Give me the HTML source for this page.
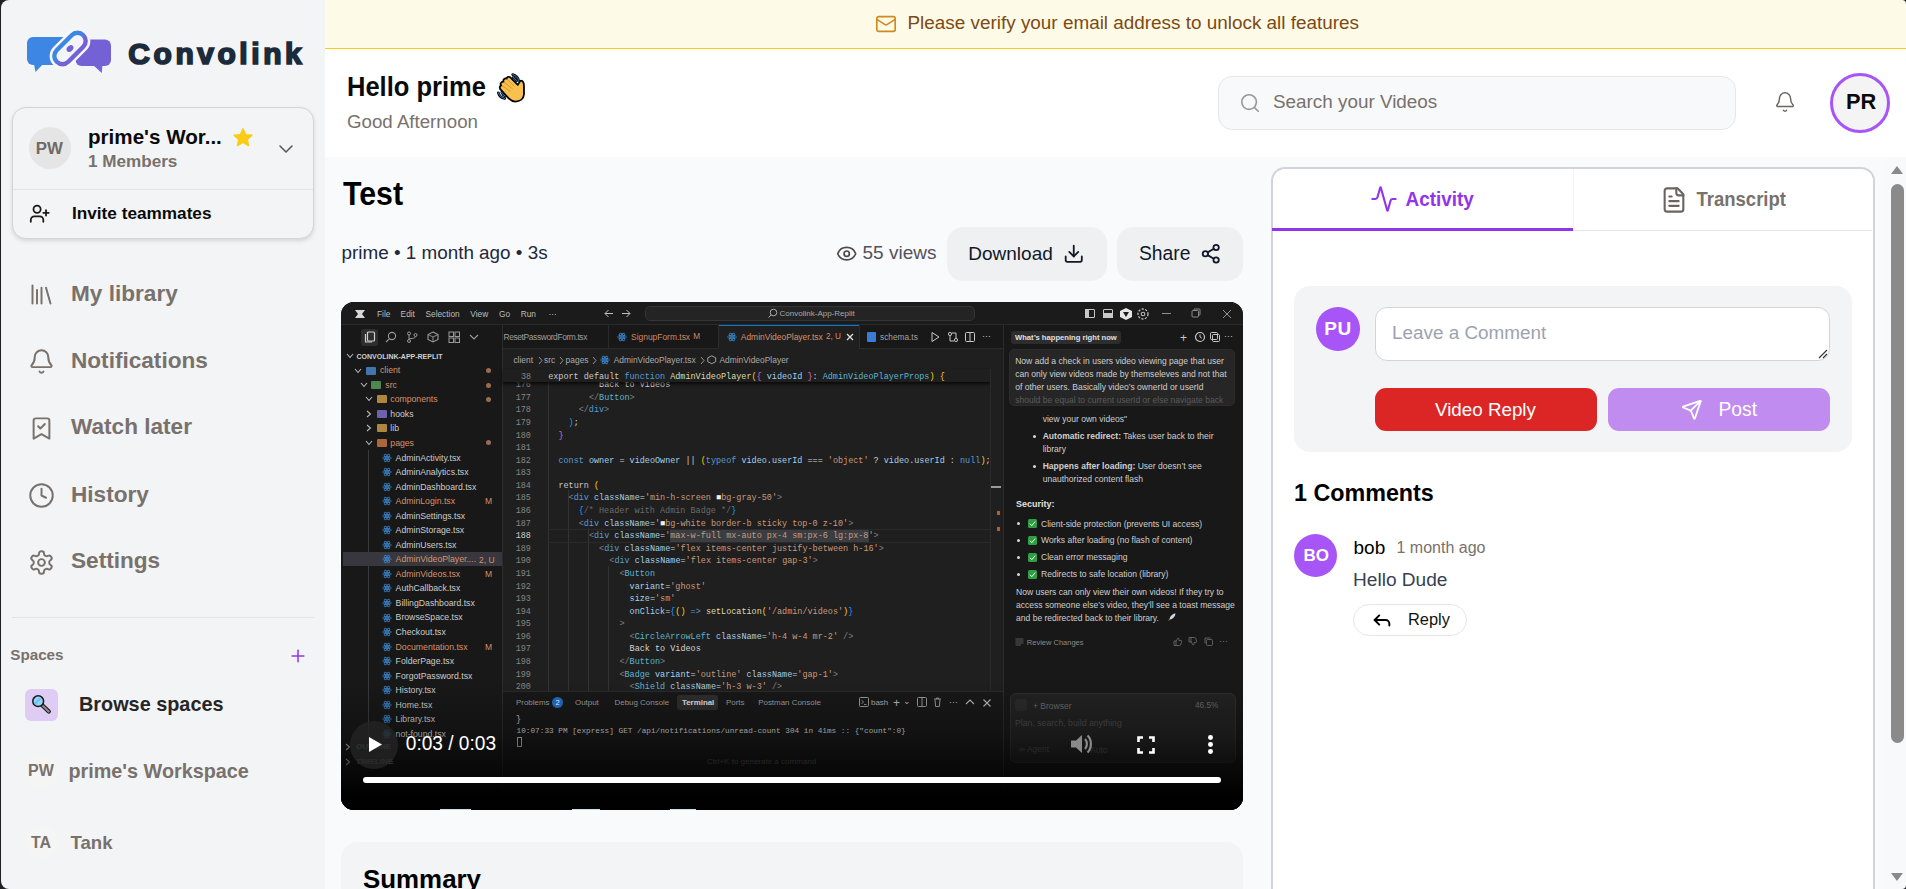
<!DOCTYPE html>
<html><head><meta charset="utf-8"><title>Convolink</title>
<style>
html,body{margin:0;padding:0;width:1906px;height:889px;overflow:hidden;background:#1f2023;}
#app{position:absolute;left:1px;top:0;width:1905px;height:889px;overflow:hidden;border-radius:8px 4px 4px 8px;}
.t{position:absolute;white-space:nowrap;line-height:1;font-family:"Liberation Sans",sans-serif;}
.r{position:absolute;}
</style></head><body><div id="app">
<div style="position:absolute;left:-1px;top:0;width:1906px;height:889px;">
<div class="r" style="left:0px;top:0px;width:325px;height:889px;background:#f3f4f6;"></div>
<svg class="r" style="left:0;top:0" width="120" height="80" viewBox="0 0 120 80">
<defs><linearGradient id="lg" x1="0" y1="-9" x2="0" y2="9" gradientUnits="userSpaceOnUse"><stop offset="0.35" stop-color="#3e86e4"/><stop offset="0.7" stop-color="#7561d6"/></linearGradient></defs>
<rect x="27" y="37" width="44" height="28" rx="6" fill="#3e86e4"/>
<path d="M33.8 63 L35.5 72 L44 63 Z" fill="#3e86e4"/>
<rect x="75.5" y="39.5" width="35.5" height="26.5" rx="6" fill="#7561d6"/>
<path d="M93 65 L101.7 73 L102.5 65 Z" fill="#7561d6"/>
<g transform="translate(70 48.5) rotate(-45)">
<rect x="-23.5" y="-12.8" width="47" height="25.6" rx="12.8" fill="#f6f7f9"/>
<rect x="-18.8" y="-8.2" width="37.6" height="16.4" rx="8.2" fill="#f3f4f6" stroke="url(#lg)" stroke-width="4.4"/>
<ellipse cx="0" cy="0" rx="3.8" ry="2.9" fill="#7561d6"/>
</g>
</svg>
<div class="t" style="left:128.30px;top:39.11px;font-size:30px;color:#1c2b3b;font-weight:700;letter-spacing:3.55px;-webkit-text-stroke:1.7px #1c2b3b;">Convolink</div>
<div class="r" style="left:12px;top:107px;width:302px;height:132px;box-sizing:border-box;border:1px solid #d4d4d8;border-radius:14px;background:#f3f4f6;box-shadow:0 2px 4px rgba(0,0,0,0.12);"></div>
<div class="r" style="left:29px;top:127px;width:42px;height:42px;border-radius:50%;background:#e5e5e5;"></div>
<div class="t" style="left:35.80px;top:140.78px;font-size:16.8px;color:#6f6a66;font-weight:700;">PW</div>
<div class="t" style="left:88.00px;top:127.06px;font-size:20.6px;color:#0a0a0a;font-weight:700;">prime's Wor...</div>
<svg class="r" style="left:232px;top:127px" width="22" height="22" viewBox="0 0 24 24"><path d="M12 2l2.9 6.26 6.86.72-5.13 4.6 1.45 6.75L12 16.9l-6.08 3.43 1.45-6.75-5.13-4.6 6.86-.72z" fill="#facc15" stroke="#facc15" stroke-width="1.5" stroke-linejoin="round"/></svg>
<div class="t" style="left:88.00px;top:152.72px;font-size:17.1px;color:#78716c;font-weight:700;">1 Members</div>
<svg class="r" style="left:274px;top:136.6px;" width="24" height="24" viewBox="0 0 24 24" fill="none" stroke="#5f5955" stroke-width="1.6" stroke-linecap="round" stroke-linejoin="round"><path d="m6 9 6 6 6-6"/></svg>
<div class="r" style="left:13px;top:189px;width:300px;height:1px;background:#e2e3e6;"></div>
<svg class="r" style="left:29.2px;top:203px;" width="21.5" height="21.5" viewBox="0 0 24 24" fill="none" stroke="#1c1917" stroke-width="2" stroke-linecap="round" stroke-linejoin="round"><path d="M16 21v-2a4 4 0 0 0-4-4H6a4 4 0 0 0-4 4v2"/><circle cx="9" cy="7" r="4"/><line x1="19" x2="19" y1="8" y2="14"/><line x1="22" x2="16" y1="11" y2="11"/></svg>
<div class="t" style="left:72.00px;top:205.44px;font-size:17.2px;color:#0a0a0a;font-weight:700;">Invite teammates</div>
<svg class="r" style="left:27.8px;top:281.2px;" width="27" height="27" viewBox="0 0 24 24" fill="none" stroke="#78716c" stroke-width="1.75" stroke-linecap="round" stroke-linejoin="round"><path d="m16 6 4 14"/><path d="M12 6v14"/><path d="M8 8v12"/><path d="M4 4v16"/></svg>
<div class="t" style="left:71.00px;top:282.67px;font-size:22.6px;color:#78716c;font-weight:700;">My library</div>
<svg class="r" style="left:27.8px;top:348.2px;" width="27" height="27" viewBox="0 0 24 24" fill="none" stroke="#78716c" stroke-width="1.75" stroke-linecap="round" stroke-linejoin="round"><path d="M10.268 21a2 2 0 0 0 3.464 0"/><path d="M3.262 15.326A1 1 0 0 0 4 17h16a1 1 0 0 0 .74-1.673C19.41 13.956 18 12.499 18 8A6 6 0 0 0 6 8c0 4.499-1.411 5.956-2.738 7.326"/></svg>
<div class="t" style="left:71.00px;top:349.67px;font-size:22.6px;color:#78716c;font-weight:700;">Notifications</div>
<svg class="r" style="left:27.8px;top:414.8px;" width="27" height="27" viewBox="0 0 24 24" fill="none" stroke="#78716c" stroke-width="1.75" stroke-linecap="round" stroke-linejoin="round"><path d="m19 21-7-4-7 4V5a2 2 0 0 1 2-2h10a2 2 0 0 1 2 2Z"/><path d="m9 10 2 2 4-4"/></svg>
<div class="t" style="left:71.00px;top:416.27px;font-size:22.6px;color:#78716c;font-weight:700;">Watch later</div>
<svg class="r" style="left:27.8px;top:482.2px;" width="27" height="27" viewBox="0 0 24 24" fill="none" stroke="#78716c" stroke-width="1.75" stroke-linecap="round" stroke-linejoin="round"><circle cx="12" cy="12" r="10"/><polyline points="12 6 12 12 16 14"/></svg>
<div class="t" style="left:71.00px;top:483.67px;font-size:22.6px;color:#78716c;font-weight:700;">History</div>
<svg class="r" style="left:27.8px;top:549.0px;" width="27" height="27" viewBox="0 0 24 24" fill="none" stroke="#78716c" stroke-width="1.75" stroke-linecap="round" stroke-linejoin="round"><path d="M12.22 2h-.44a2 2 0 0 0-2 2v.18a2 2 0 0 1-1 1.73l-.43.25a2 2 0 0 1-2 0l-.15-.08a2 2 0 0 0-2.73.73l-.22.38a2 2 0 0 0 .73 2.73l.15.1a2 2 0 0 1 1 1.72v.51a2 2 0 0 1-1 1.74l-.15.09a2 2 0 0 0-.73 2.73l.22.38a2 2 0 0 0 2.73.73l.15-.08a2 2 0 0 1 2 0l.43.25a2 2 0 0 1 1 1.73V20a2 2 0 0 0 2 2h.44a2 2 0 0 0 2-2v-.18a2 2 0 0 1 1-1.73l.43-.25a2 2 0 0 1 2 0l.15.08a2 2 0 0 0 2.73-.73l.22-.39a2 2 0 0 0-.73-2.73l-.15-.08a2 2 0 0 1-1-1.74v-.5a2 2 0 0 1 1-1.74l.15-.09a2 2 0 0 0 .73-2.73l-.22-.38a2 2 0 0 0-2.73-.73l-.15.08a2 2 0 0 1-2 0l-.43-.25a2 2 0 0 1-1-1.73V4a2 2 0 0 0-2-2z"/><circle cx="12" cy="12" r="3"/></svg>
<div class="t" style="left:71.00px;top:550.47px;font-size:22.6px;color:#78716c;font-weight:700;">Settings</div>
<div class="r" style="left:12px;top:617px;width:302px;height:1px;background:#e2e3e6;"></div>
<div class="t" style="left:10.30px;top:646.63px;font-size:15.2px;color:#78716c;font-weight:700;">Spaces</div>
<svg class="r" style="left:288px;top:646px;" width="20" height="20" viewBox="0 0 24 24" fill="none" stroke="#9333ea" stroke-width="1.8" stroke-linecap="round" stroke-linejoin="round"><path d="M5 12h14"/><path d="M12 5v14"/></svg>
<div class="r" style="left:25px;top:689px;width:33px;height:32px;border-radius:6px;background:#dfccf5;"></div>
<svg class="r" style="left:30px;top:694px" width="24" height="24" viewBox="0 0 24 24">
<path d="M12.2 11.2 L18.8 17.6" stroke="#111" stroke-width="4.2" stroke-linecap="round"/>
<path d="M12.2 11.2 L18.8 17.6" stroke="#8a8a8a" stroke-width="2.2" stroke-linecap="round"/>
<circle cx="8.2" cy="7.2" r="5.4" fill="#8fd3f7" stroke="#1a1a1a" stroke-width="1.5"/>
<path d="M5 9.5 L10.5 4.5" stroke="#6ab6ef" stroke-width="1.6"/>
</svg>
<div class="t" style="left:79.00px;top:694.50px;font-size:19.85px;color:#262626;font-weight:700;">Browse spaces</div>
<div class="r" style="left:26px;top:756px;width:32px;height:32px;border-radius:50%;background:#f5f5f4;"></div>
<div class="t" style="left:28.00px;top:763.46px;font-size:16px;color:#78716c;font-weight:700;">PW</div>
<div class="t" style="left:68.50px;top:762.44px;font-size:19.8px;color:#78716c;font-weight:700;">prime's Workspace</div>
<div class="r" style="left:26px;top:826px;width:32px;height:32px;border-radius:50%;background:#f5f5f4;"></div>
<div class="t" style="left:31.00px;top:835.46px;font-size:16px;color:#78716c;font-weight:700;">TA</div>
<div class="t" style="left:70.50px;top:833.76px;font-size:18.6px;color:#78716c;font-weight:700;">Tank</div>
<div class="r" style="left:325px;top:0px;width:1581px;height:48px;background:#fefae8;"></div>
<div class="r" style="left:325px;top:48px;width:1581px;height:1px;background:#facc15;"></div>
<svg class="r" style="left:875px;top:13px;" width="22" height="22" viewBox="0 0 24 24" fill="none" stroke="#d08a1e" stroke-width="1.8" stroke-linecap="round" stroke-linejoin="round"><rect width="20" height="16" x="2" y="4" rx="2"/><path d="m22 7-8.97 5.7a1.94 1.94 0 0 1-2.06 0L2 7"/></svg>
<div class="t" style="left:907.50px;top:14.20px;font-size:18.9px;color:#7c4a12;font-weight:400;">Please verify your email address to unlock all features</div>
<div class="r" style="left:325px;top:49px;width:1581px;height:108px;background:#ffffff;"></div>
<div class="t" style="left:347.00px;top:75.41px;font-size:25.5px;color:#0a0a0a;font-weight:700;transform:scaleY(1.06);transform-origin:0 21.59px;">Hello prime</div>
<svg class="r" style="left:490px;top:68px" width="40" height="38" viewBox="0 0 936 889">
<g stroke-linecap="round" fill="none">
<path d="M530 155 C600 175 650 220 670 290" stroke="#000" stroke-width="62"/><path d="M540 225 C580 240 610 265 620 300" stroke="#000" stroke-width="62"/>
<path d="M195 580 C215 650 270 700 345 712" stroke="#000" stroke-width="62"/><path d="M275 570 C290 610 315 640 350 650" stroke="#000" stroke-width="62"/>
</g>
<path d="M745 300 C790 320 795 380 795 430 L795 620 C785 720 705 785 590 785 C520 785 470 745 420 695 L250 505 C215 465 225 420 262 405 C230 370 260 315 315 318 C300 270 340 235 392 248 C392 205 445 195 475 218 L650 395 L690 330 C705 300 722 290 745 300 Z" fill="#f8c04f" stroke="#000" stroke-width="42" stroke-linejoin="round"/>
<g stroke="#d08a20" stroke-width="18" stroke-linecap="round" fill="none">
<path d="M290 420 L470 540"/><path d="M330 335 L520 480"/><path d="M400 265 L560 420"/>
</g>
<g stroke-linecap="round" fill="none" stroke="#3a8be0" stroke-width="22">
<path d="M530 155 C600 175 650 220 670 290"/><path d="M540 225 C580 240 610 265 620 300"/>
<path d="M195 580 C215 650 270 700 345 712"/><path d="M275 570 C290 610 315 640 350 650"/>
</g>
</svg>
<div class="t" style="left:347.00px;top:112.87px;font-size:18.7px;color:#78716c;font-weight:400;">Good Afternoon</div>
<div class="r" style="left:1218px;top:76px;width:518px;height:54px;box-sizing:border-box;border:1px solid #e5e7eb;border-radius:14px;background:#f8f9fa;"></div>
<svg class="r" style="left:1239px;top:92px;" width="22" height="22" viewBox="0 0 24 24" fill="none" stroke="#999999" stroke-width="1.8" stroke-linecap="round" stroke-linejoin="round"><circle cx="11" cy="11" r="8"/><path d="m21 21-4.3-4.3"/></svg>
<div class="t" style="left:1273.00px;top:93.34px;font-size:18.86px;color:#78716c;font-weight:400;">Search your Videos</div>
<svg class="r" style="left:1774px;top:91px;" width="22" height="22" viewBox="0 0 24 24" fill="none" stroke="#6b6461" stroke-width="1.6" stroke-linecap="round" stroke-linejoin="round"><path d="M10.268 21a2 2 0 0 0 3.464 0"/><path d="M3.262 15.326A1 1 0 0 0 4 17h16a1 1 0 0 0 .74-1.673C19.41 13.956 18 12.499 18 8A6 6 0 0 0 6 8c0 4.499-1.411 5.956-2.738 7.326"/></svg>
<div class="r" style="left:1830px;top:73px;width:60px;height:60px;box-sizing:border-box;border:3px solid #a855f7;border-radius:50%;background:#f4f4f4;"></div>
<div class="t" style="left:1846.00px;top:90.55px;font-size:21.8px;color:#0a0a0a;font-weight:700;">PR</div>
<div class="r" style="left:325px;top:157px;width:1561px;height:732px;background:#f9fafb;"></div>
<div class="t" style="left:343.00px;top:180.15px;font-size:30.3px;color:#000;font-weight:700;transform:scaleY(1.09);transform-origin:0 25.65px;">Test</div>
<div class="t" style="left:341.50px;top:243.73px;font-size:18.87px;color:#1e293b;font-weight:400;">prime &bull; 1 month ago &bull; 3s</div>
<svg class="r" style="left:836.1px;top:242.8px;" width="21.4" height="21.4" viewBox="0 0 24 24" fill="none" stroke="#4f4a47" stroke-width="1.9" stroke-linecap="round" stroke-linejoin="round"><path d="M2.062 12.348a1 1 0 0 1 0-.696 10.75 10.75 0 0 1 19.876 0 1 1 0 0 1 0 .696 10.75 10.75 0 0 1-19.876 0"/><circle cx="12" cy="12" r="3"/></svg>
<div class="t" style="left:862.50px;top:242.82px;font-size:19px;color:#52525b;font-weight:400;">55 views</div>
<div class="r" style="left:947px;top:227px;width:160px;height:54px;border-radius:16px;background:#eff0f2;"></div>
<div class="t" style="left:968.30px;top:243.92px;font-size:19.0px;color:#111827;font-weight:400;">Download</div>
<svg class="r" style="left:1063.3px;top:242.8px;" width="21.5" height="21.5" viewBox="0 0 24 24" fill="none" stroke="#111827" stroke-width="2" stroke-linecap="round" stroke-linejoin="round"><path d="M21 15v4a2 2 0 0 1-2 2H5a2 2 0 0 1-2-2v-4"/><polyline points="7 10 12 15 17 10"/><line x1="12" x2="12" y1="15" y2="3"/></svg>
<div class="r" style="left:1117px;top:227px;width:126px;height:54px;border-radius:16px;background:#eff0f2;"></div>
<div class="t" style="left:1139.00px;top:243.66px;font-size:19.3px;color:#111827;font-weight:400;">Share</div>
<svg class="r" style="left:1200px;top:242.8px;" width="21.5" height="21.5" viewBox="0 0 24 24" fill="none" stroke="#111827" stroke-width="2" stroke-linecap="round" stroke-linejoin="round"><circle cx="18" cy="5" r="3"/><circle cx="6" cy="12" r="3"/><circle cx="18" cy="19" r="3"/><line x1="8.59" x2="15.42" y1="13.51" y2="17.49"/><line x1="15.41" x2="8.59" y1="6.51" y2="10.49"/></svg>
<div class="r" style="left:341px;top:302px;width:902px;height:508px;border-radius:13px;overflow:hidden;background:#000;">
<div class="r" style="left:0;top:0;width:902px;height:508px;">
<div class="r" style="left:0.0px;top:0.0px;width:902px;height:23px;background:#1b1b1b;"></div>
<div class="r" style="left:0.0px;top:22.0px;width:902px;height:1px;background:#2b2b2b;"></div>
<svg class="r" style="left:11px;top:4px;" width="16" height="16" viewBox="0 0 16 16" preserveAspectRatio="none"><path d="M3 4 L13 4 L10 8 L13 12 L3 12 L6 8 Z" fill="#d8d8d8"/></svg>
<div class="t" style="left:36.0px;top:7.67px;font-size:8.3px;color:#bdbdbd;font-weight:400;">File</div>
<div class="t" style="left:59.6px;top:7.67px;font-size:8.3px;color:#bdbdbd;font-weight:400;">Edit</div>
<div class="t" style="left:84.5px;top:7.67px;font-size:8.3px;color:#bdbdbd;font-weight:400;">Selection</div>
<div class="t" style="left:129.3px;top:7.67px;font-size:8.3px;color:#bdbdbd;font-weight:400;">View</div>
<div class="t" style="left:158.0px;top:7.67px;font-size:8.3px;color:#bdbdbd;font-weight:400;">Go</div>
<div class="t" style="left:179.7px;top:7.67px;font-size:8.3px;color:#bdbdbd;font-weight:400;">Run</div>
<div class="t" style="left:207.6px;top:7.67px;font-size:8.3px;color:#bdbdbd;font-weight:400;">···</div>
<svg class="r" style="left:263px;top:7px;" width="10" height="9" viewBox="0 0 10 9" preserveAspectRatio="none"><path d="M9 4.5 H1.2 M4.5 1 L1 4.5 L4.5 8" fill="none" stroke="#c0c0c0" stroke-width="1"/></svg>
<svg class="r" style="left:280px;top:7px;" width="10" height="9" viewBox="0 0 10 9" preserveAspectRatio="none"><path d="M1 4.5 H8.8 M5.5 1 L9 4.5 L5.5 8" fill="none" stroke="#c0c0c0" stroke-width="1"/></svg>
<div class="r" style="left:303.5px;top:4.0px;width:330px;height:15px;box-sizing:border-box;border:1px solid #353535;border-radius:5px;background:#242424;"></div>
<svg class="r" style="left:426px;top:6px;" width="11" height="11" viewBox="0 0 11 11" preserveAspectRatio="none"><circle cx="6.5" cy="4.5" r="3.3" fill="none" stroke="#aaa" stroke-width="1"/><path d="M4 7 L1.5 9.5" stroke="#aaa" stroke-width="1"/></svg>
<div class="t" style="left:438.6px;top:7.85px;font-size:8.0px;color:#a8a8a8;font-weight:400;">Convolink-App-Replit</div>
<div class="r" style="left:744.0px;top:7.0px;width:10px;height:9px;box-sizing:border-box;border:1.3px solid #c8c8c8;border-radius:1px;"></div>
<div class="r" style="left:762.0px;top:7.0px;width:10px;height:9px;box-sizing:border-box;border:1.3px solid #c8c8c8;border-radius:1px;"></div>
<div class="r" style="left:744.0px;top:7.0px;width:4px;height:9px;background:#c8c8c8;"></div>
<div class="r" style="left:762.0px;top:11.0px;width:10px;height:5px;background:#c8c8c8;"></div>
<svg class="r" style="left:778px;top:5px;" width="14" height="14" viewBox="0 0 14 14" preserveAspectRatio="none"><path d="M7 1 L13 4 L13 10 L7 13 L1 10 L1 4 Z" fill="#e6e6e6"/><path d="M4 5 L10 5 L7 10 Z" fill="#1b1b1b"/></svg>
<svg class="r" style="left:795px;top:5px;" width="14" height="14" viewBox="0 0 14 14" preserveAspectRatio="none"><circle cx="7" cy="7" r="5" fill="none" stroke="#bdbdbd" stroke-width="1.3" stroke-dasharray="2.2 1.4"/><circle cx="7" cy="7" r="1.8" fill="none" stroke="#bdbdbd" stroke-width="1.1"/></svg>
<div class="r" style="left:820.5px;top:11.0px;width:9px;height:1px;background:#8f8f8f;"></div>
<svg class="r" style="left:850px;top:6px;" width="10" height="10" viewBox="0 0 10 10" preserveAspectRatio="none"><rect x="1" y="2.5" width="6.5" height="6.5" rx="1" fill="none" stroke="#9a9a9a" stroke-width="0.9"/><path d="M3 2.5 V1.5 Q3 1 3.5 1 H8.5 Q9 1 9 1.5 V6.5 Q9 7 8.5 7 H7.5" fill="none" stroke="#9a9a9a" stroke-width="0.9"/></svg>
<svg class="r" style="left:881px;top:6.5px;" width="10" height="10" viewBox="0 0 10 10" preserveAspectRatio="none"><path d="M1 1 L9 9 M9 1 L1 9" stroke="#a0a0a0" stroke-width="0.9"/></svg>
<div class="r" style="left:0.0px;top:23.0px;width:161px;height:485px;background:#181818;"></div>
<div class="r" style="left:161.0px;top:23.0px;width:1px;height:485px;background:#2b2b2b;"></div>
<div class="r" style="left:20.0px;top:27.0px;width:17px;height:17px;border-radius:3px;background:#2e2e2e;"></div>
<svg class="r" style="left:23px;top:29px;" width="12" height="12" viewBox="0 0 12 12" preserveAspectRatio="none"><rect x="3.5" y="1" width="7" height="9" rx="1" fill="none" stroke="#d0d0d0" stroke-width="1.2"/><path d="M1.5 3 V11 H8" fill="none" stroke="#d0d0d0" stroke-width="1.2"/></svg>
<svg class="r" style="left:44px;top:29px;" width="12" height="12" viewBox="0 0 12 12" preserveAspectRatio="none"><circle cx="7" cy="5" r="3.6" fill="none" stroke="#9a9a9a" stroke-width="1.1"/><path d="M4.3 7.8 L1 11" stroke="#9a9a9a" stroke-width="1.1"/></svg>
<svg class="r" style="left:65px;top:29px;" width="12" height="12" viewBox="0 0 12 12" preserveAspectRatio="none"><circle cx="3" cy="2.5" r="1.5" fill="none" stroke="#9a9a9a"/><circle cx="3" cy="10" r="1.5" fill="none" stroke="#9a9a9a"/><circle cx="9.5" cy="4" r="1.5" fill="none" stroke="#9a9a9a"/><path d="M3 4 V8.5 M9.5 5.5 C9.5 8 3 7 3 8.5" fill="none" stroke="#9a9a9a"/></svg>
<svg class="r" style="left:86px;top:29px;" width="12" height="12" viewBox="0 0 12 12" preserveAspectRatio="none"><path d="M6 1 L11 3.5 L11 8.5 L6 11 L1 8.5 L1 3.5 Z" fill="none" stroke="#9a9a9a" stroke-width="1.1"/><path d="M1 3.5 L6 6 L11 3.5 M6 6 V11" fill="none" stroke="#9a9a9a" stroke-width="0.9"/></svg>
<svg class="r" style="left:107px;top:29px;" width="12" height="12" viewBox="0 0 12 12" preserveAspectRatio="none"><rect x="1" y="1" width="4.5" height="4.5" fill="none" stroke="#9a9a9a"/><rect x="7" y="1" width="4.5" height="4.5" fill="none" stroke="#9a9a9a"/><rect x="1" y="7" width="4.5" height="4.5" fill="none" stroke="#9a9a9a"/><rect x="7" y="7" width="4.5" height="4.5" fill="none" stroke="#9a9a9a"/></svg>
<svg class="r" style="left:128px;top:31px;" width="10" height="8" viewBox="0 0 10 8" preserveAspectRatio="none"><path d="M1 2 L5 6 L9 2" fill="none" stroke="#9a9a9a" stroke-width="1.1"/></svg>
<svg class="r" style="left:5px;top:50.5px;" width="8" height="6" viewBox="0 0 8 6" preserveAspectRatio="none"><path d="M1 1 L4 4.5 L7 1" fill="none" stroke="#b8b8b8" stroke-width="1.1"/></svg>
<div class="t" style="left:15.5px;top:50.83px;font-size:7.0px;color:#d0d0d0;font-weight:700;">CONVOLINK-APP-REPLIT</div>
<svg class="r" style="left:13px;top:65.5px;" width="8" height="6" viewBox="0 0 8 6" preserveAspectRatio="none"><path d="M1 1 L4 4.5 L7 1" fill="none" stroke="#b8b8b8" stroke-width="1.1"/></svg>
<div class="r" style="left:24.5px;top:64.5px;width:10.5px;height:8px;border-radius:1px;background:#4a86c8;opacity:0.85;"></div>
<div class="t" style="left:39.0px;top:64.44px;font-size:8.7px;color:#d7916a;font-weight:400;">client</div>
<div class="r" style="left:145.0px;top:66.0px;width:5px;height:5px;border-radius:50%;background:#9a6b55;"></div>
<svg class="r" style="left:19px;top:80px;" width="8" height="6" viewBox="0 0 8 6" preserveAspectRatio="none"><path d="M1 1 L4 4.5 L7 1" fill="none" stroke="#b8b8b8" stroke-width="1.1"/></svg>
<div class="r" style="left:29.7px;top:79.0px;width:10.5px;height:8px;border-radius:1px;background:#5b9a5b;opacity:0.85;"></div>
<div class="t" style="left:44.3px;top:78.94px;font-size:8.7px;color:#d7916a;font-weight:400;">src</div>
<div class="r" style="left:145.0px;top:80.5px;width:5px;height:5px;border-radius:50%;background:#9a6b55;"></div>
<svg class="r" style="left:24px;top:94.30000000000001px;" width="8" height="6" viewBox="0 0 8 6" preserveAspectRatio="none"><path d="M1 1 L4 4.5 L7 1" fill="none" stroke="#b8b8b8" stroke-width="1.1"/></svg>
<div class="r" style="left:35.5px;top:93.3px;width:10.5px;height:8px;border-radius:1px;background:#c89a48;opacity:0.85;"></div>
<div class="t" style="left:49.3px;top:93.24px;font-size:8.7px;color:#d7916a;font-weight:400;">components</div>
<div class="r" style="left:145.0px;top:94.8px;width:5px;height:5px;border-radius:50%;background:#9a6b55;"></div>
<svg class="r" style="left:25px;top:107.89999999999998px;" width="6" height="8" viewBox="0 0 6 8" preserveAspectRatio="none"><path d="M1 1 L4.5 4 L1 7" fill="none" stroke="#b8b8b8" stroke-width="1.1"/></svg>
<div class="r" style="left:35.5px;top:107.9px;width:10.5px;height:8px;border-radius:1px;background:#7f70c8;opacity:0.85;"></div>
<div class="t" style="left:49.3px;top:107.84px;font-size:8.7px;color:#cccccc;font-weight:400;">hooks</div>
<svg class="r" style="left:25px;top:122.30000000000001px;" width="6" height="8" viewBox="0 0 6 8" preserveAspectRatio="none"><path d="M1 1 L4.5 4 L1 7" fill="none" stroke="#b8b8b8" stroke-width="1.1"/></svg>
<div class="r" style="left:35.5px;top:122.3px;width:10.5px;height:8px;border-radius:1px;background:#c89a48;opacity:0.85;"></div>
<div class="t" style="left:49.3px;top:122.24px;font-size:8.7px;color:#cccccc;font-weight:400;">lib</div>
<svg class="r" style="left:24px;top:137.7px;" width="8" height="6" viewBox="0 0 8 6" preserveAspectRatio="none"><path d="M1 1 L4 4.5 L7 1" fill="none" stroke="#b8b8b8" stroke-width="1.1"/></svg>
<div class="r" style="left:35.5px;top:136.7px;width:10.5px;height:8px;border-radius:1px;background:#c8743e;opacity:0.85;"></div>
<div class="t" style="left:49.3px;top:136.64px;font-size:8.7px;color:#d7916a;font-weight:400;">pages</div>
<div class="r" style="left:145.0px;top:138.2px;width:5px;height:5px;border-radius:50%;background:#9a6b55;"></div>
<div class="r" style="left:27.0px;top:148.0px;width:1px;height:300px;background:#3a3a3a;"></div>
<svg class="r" style="left:40.5px;top:150.8px;" width="10" height="10" viewBox="0 0 10 10" preserveAspectRatio="none"><circle cx="5" cy="5" r="0.9" fill="#3b8ed8"/><ellipse cx="5" cy="5" rx="4.4" ry="1.6" fill="none" stroke="#3b8ed8" stroke-width="0.7"/><ellipse cx="5" cy="5" rx="4.4" ry="1.6" fill="none" stroke="#3b8ed8" stroke-width="0.7" transform="rotate(60 5 5)"/><ellipse cx="5" cy="5" rx="4.4" ry="1.6" fill="none" stroke="#3b8ed8" stroke-width="0.7" transform="rotate(120 5 5)"/></svg>
<div class="t" style="left:54.6px;top:151.74px;font-size:8.7px;color:#cccccc;font-weight:400;">AdminActivity.tsx</div>
<svg class="r" style="left:40.5px;top:165.32px;" width="10" height="10" viewBox="0 0 10 10" preserveAspectRatio="none"><circle cx="5" cy="5" r="0.9" fill="#3b8ed8"/><ellipse cx="5" cy="5" rx="4.4" ry="1.6" fill="none" stroke="#3b8ed8" stroke-width="0.7"/><ellipse cx="5" cy="5" rx="4.4" ry="1.6" fill="none" stroke="#3b8ed8" stroke-width="0.7" transform="rotate(60 5 5)"/><ellipse cx="5" cy="5" rx="4.4" ry="1.6" fill="none" stroke="#3b8ed8" stroke-width="0.7" transform="rotate(120 5 5)"/></svg>
<div class="t" style="left:54.6px;top:166.26px;font-size:8.7px;color:#cccccc;font-weight:400;">AdminAnalytics.tsx</div>
<svg class="r" style="left:40.5px;top:179.84000000000003px;" width="10" height="10" viewBox="0 0 10 10" preserveAspectRatio="none"><circle cx="5" cy="5" r="0.9" fill="#3b8ed8"/><ellipse cx="5" cy="5" rx="4.4" ry="1.6" fill="none" stroke="#3b8ed8" stroke-width="0.7"/><ellipse cx="5" cy="5" rx="4.4" ry="1.6" fill="none" stroke="#3b8ed8" stroke-width="0.7" transform="rotate(60 5 5)"/><ellipse cx="5" cy="5" rx="4.4" ry="1.6" fill="none" stroke="#3b8ed8" stroke-width="0.7" transform="rotate(120 5 5)"/></svg>
<div class="t" style="left:54.6px;top:180.78px;font-size:8.7px;color:#cccccc;font-weight:400;">AdminDashboard.tsx</div>
<svg class="r" style="left:40.5px;top:194.36px;" width="10" height="10" viewBox="0 0 10 10" preserveAspectRatio="none"><circle cx="5" cy="5" r="0.9" fill="#3b8ed8"/><ellipse cx="5" cy="5" rx="4.4" ry="1.6" fill="none" stroke="#3b8ed8" stroke-width="0.7"/><ellipse cx="5" cy="5" rx="4.4" ry="1.6" fill="none" stroke="#3b8ed8" stroke-width="0.7" transform="rotate(60 5 5)"/><ellipse cx="5" cy="5" rx="4.4" ry="1.6" fill="none" stroke="#3b8ed8" stroke-width="0.7" transform="rotate(120 5 5)"/></svg>
<div class="t" style="left:54.6px;top:195.30px;font-size:8.7px;color:#d7916a;font-weight:400;">AdminLogin.tsx</div>
<div class="t" style="left:144.0px;top:195.42px;font-size:8.5px;color:#d7916a;font-weight:400;">M</div>
<svg class="r" style="left:40.5px;top:208.88px;" width="10" height="10" viewBox="0 0 10 10" preserveAspectRatio="none"><circle cx="5" cy="5" r="0.9" fill="#3b8ed8"/><ellipse cx="5" cy="5" rx="4.4" ry="1.6" fill="none" stroke="#3b8ed8" stroke-width="0.7"/><ellipse cx="5" cy="5" rx="4.4" ry="1.6" fill="none" stroke="#3b8ed8" stroke-width="0.7" transform="rotate(60 5 5)"/><ellipse cx="5" cy="5" rx="4.4" ry="1.6" fill="none" stroke="#3b8ed8" stroke-width="0.7" transform="rotate(120 5 5)"/></svg>
<div class="t" style="left:54.6px;top:209.82px;font-size:8.7px;color:#cccccc;font-weight:400;">AdminSettings.tsx</div>
<svg class="r" style="left:40.5px;top:223.39999999999998px;" width="10" height="10" viewBox="0 0 10 10" preserveAspectRatio="none"><circle cx="5" cy="5" r="0.9" fill="#3b8ed8"/><ellipse cx="5" cy="5" rx="4.4" ry="1.6" fill="none" stroke="#3b8ed8" stroke-width="0.7"/><ellipse cx="5" cy="5" rx="4.4" ry="1.6" fill="none" stroke="#3b8ed8" stroke-width="0.7" transform="rotate(60 5 5)"/><ellipse cx="5" cy="5" rx="4.4" ry="1.6" fill="none" stroke="#3b8ed8" stroke-width="0.7" transform="rotate(120 5 5)"/></svg>
<div class="t" style="left:54.6px;top:224.34px;font-size:8.7px;color:#cccccc;font-weight:400;">AdminStorage.tsx</div>
<svg class="r" style="left:40.5px;top:237.92000000000007px;" width="10" height="10" viewBox="0 0 10 10" preserveAspectRatio="none"><circle cx="5" cy="5" r="0.9" fill="#3b8ed8"/><ellipse cx="5" cy="5" rx="4.4" ry="1.6" fill="none" stroke="#3b8ed8" stroke-width="0.7"/><ellipse cx="5" cy="5" rx="4.4" ry="1.6" fill="none" stroke="#3b8ed8" stroke-width="0.7" transform="rotate(60 5 5)"/><ellipse cx="5" cy="5" rx="4.4" ry="1.6" fill="none" stroke="#3b8ed8" stroke-width="0.7" transform="rotate(120 5 5)"/></svg>
<div class="t" style="left:54.6px;top:238.86px;font-size:8.7px;color:#cccccc;font-weight:400;">AdminUsers.tsx</div>
<div class="r" style="left:2.0px;top:250.4px;width:159px;height:14px;background:#37373d;"></div>
<svg class="r" style="left:40.5px;top:252.44000000000005px;" width="10" height="10" viewBox="0 0 10 10" preserveAspectRatio="none"><circle cx="5" cy="5" r="0.9" fill="#3b8ed8"/><ellipse cx="5" cy="5" rx="4.4" ry="1.6" fill="none" stroke="#3b8ed8" stroke-width="0.7"/><ellipse cx="5" cy="5" rx="4.4" ry="1.6" fill="none" stroke="#3b8ed8" stroke-width="0.7" transform="rotate(60 5 5)"/><ellipse cx="5" cy="5" rx="4.4" ry="1.6" fill="none" stroke="#3b8ed8" stroke-width="0.7" transform="rotate(120 5 5)"/></svg>
<div class="t" style="left:54.6px;top:253.38px;font-size:8.7px;color:#d7916a;font-weight:400;">AdminVideoPlayer....</div>
<div class="t" style="left:138.0px;top:253.50px;font-size:8.5px;color:#d7916a;font-weight:400;">2, U</div>
<svg class="r" style="left:40.5px;top:266.96000000000004px;" width="10" height="10" viewBox="0 0 10 10" preserveAspectRatio="none"><circle cx="5" cy="5" r="0.9" fill="#3b8ed8"/><ellipse cx="5" cy="5" rx="4.4" ry="1.6" fill="none" stroke="#3b8ed8" stroke-width="0.7"/><ellipse cx="5" cy="5" rx="4.4" ry="1.6" fill="none" stroke="#3b8ed8" stroke-width="0.7" transform="rotate(60 5 5)"/><ellipse cx="5" cy="5" rx="4.4" ry="1.6" fill="none" stroke="#3b8ed8" stroke-width="0.7" transform="rotate(120 5 5)"/></svg>
<div class="t" style="left:54.6px;top:267.90px;font-size:8.7px;color:#d7916a;font-weight:400;">AdminVideos.tsx</div>
<div class="t" style="left:144.0px;top:268.02px;font-size:8.5px;color:#d7916a;font-weight:400;">M</div>
<svg class="r" style="left:40.5px;top:281.48px;" width="10" height="10" viewBox="0 0 10 10" preserveAspectRatio="none"><circle cx="5" cy="5" r="0.9" fill="#3b8ed8"/><ellipse cx="5" cy="5" rx="4.4" ry="1.6" fill="none" stroke="#3b8ed8" stroke-width="0.7"/><ellipse cx="5" cy="5" rx="4.4" ry="1.6" fill="none" stroke="#3b8ed8" stroke-width="0.7" transform="rotate(60 5 5)"/><ellipse cx="5" cy="5" rx="4.4" ry="1.6" fill="none" stroke="#3b8ed8" stroke-width="0.7" transform="rotate(120 5 5)"/></svg>
<div class="t" style="left:54.6px;top:282.42px;font-size:8.7px;color:#cccccc;font-weight:400;">AuthCallback.tsx</div>
<svg class="r" style="left:40.5px;top:296.0px;" width="10" height="10" viewBox="0 0 10 10" preserveAspectRatio="none"><circle cx="5" cy="5" r="0.9" fill="#3b8ed8"/><ellipse cx="5" cy="5" rx="4.4" ry="1.6" fill="none" stroke="#3b8ed8" stroke-width="0.7"/><ellipse cx="5" cy="5" rx="4.4" ry="1.6" fill="none" stroke="#3b8ed8" stroke-width="0.7" transform="rotate(60 5 5)"/><ellipse cx="5" cy="5" rx="4.4" ry="1.6" fill="none" stroke="#3b8ed8" stroke-width="0.7" transform="rotate(120 5 5)"/></svg>
<div class="t" style="left:54.6px;top:296.94px;font-size:8.7px;color:#cccccc;font-weight:400;">BillingDashboard.tsx</div>
<svg class="r" style="left:40.5px;top:310.52px;" width="10" height="10" viewBox="0 0 10 10" preserveAspectRatio="none"><circle cx="5" cy="5" r="0.9" fill="#3b8ed8"/><ellipse cx="5" cy="5" rx="4.4" ry="1.6" fill="none" stroke="#3b8ed8" stroke-width="0.7"/><ellipse cx="5" cy="5" rx="4.4" ry="1.6" fill="none" stroke="#3b8ed8" stroke-width="0.7" transform="rotate(60 5 5)"/><ellipse cx="5" cy="5" rx="4.4" ry="1.6" fill="none" stroke="#3b8ed8" stroke-width="0.7" transform="rotate(120 5 5)"/></svg>
<div class="t" style="left:54.6px;top:311.46px;font-size:8.7px;color:#cccccc;font-weight:400;">BrowseSpace.tsx</div>
<svg class="r" style="left:40.5px;top:325.03999999999996px;" width="10" height="10" viewBox="0 0 10 10" preserveAspectRatio="none"><circle cx="5" cy="5" r="0.9" fill="#3b8ed8"/><ellipse cx="5" cy="5" rx="4.4" ry="1.6" fill="none" stroke="#3b8ed8" stroke-width="0.7"/><ellipse cx="5" cy="5" rx="4.4" ry="1.6" fill="none" stroke="#3b8ed8" stroke-width="0.7" transform="rotate(60 5 5)"/><ellipse cx="5" cy="5" rx="4.4" ry="1.6" fill="none" stroke="#3b8ed8" stroke-width="0.7" transform="rotate(120 5 5)"/></svg>
<div class="t" style="left:54.6px;top:325.98px;font-size:8.7px;color:#cccccc;font-weight:400;">Checkout.tsx</div>
<svg class="r" style="left:40.5px;top:339.55999999999995px;" width="10" height="10" viewBox="0 0 10 10" preserveAspectRatio="none"><circle cx="5" cy="5" r="0.9" fill="#3b8ed8"/><ellipse cx="5" cy="5" rx="4.4" ry="1.6" fill="none" stroke="#3b8ed8" stroke-width="0.7"/><ellipse cx="5" cy="5" rx="4.4" ry="1.6" fill="none" stroke="#3b8ed8" stroke-width="0.7" transform="rotate(60 5 5)"/><ellipse cx="5" cy="5" rx="4.4" ry="1.6" fill="none" stroke="#3b8ed8" stroke-width="0.7" transform="rotate(120 5 5)"/></svg>
<div class="t" style="left:54.6px;top:340.50px;font-size:8.7px;color:#d7916a;font-weight:400;">Documentation.tsx</div>
<div class="t" style="left:144.0px;top:340.62px;font-size:8.5px;color:#d7916a;font-weight:400;">M</div>
<svg class="r" style="left:40.5px;top:354.08000000000004px;" width="10" height="10" viewBox="0 0 10 10" preserveAspectRatio="none"><circle cx="5" cy="5" r="0.9" fill="#3b8ed8"/><ellipse cx="5" cy="5" rx="4.4" ry="1.6" fill="none" stroke="#3b8ed8" stroke-width="0.7"/><ellipse cx="5" cy="5" rx="4.4" ry="1.6" fill="none" stroke="#3b8ed8" stroke-width="0.7" transform="rotate(60 5 5)"/><ellipse cx="5" cy="5" rx="4.4" ry="1.6" fill="none" stroke="#3b8ed8" stroke-width="0.7" transform="rotate(120 5 5)"/></svg>
<div class="t" style="left:54.6px;top:355.02px;font-size:8.7px;color:#cccccc;font-weight:400;">FolderPage.tsx</div>
<svg class="r" style="left:40.5px;top:368.6px;" width="10" height="10" viewBox="0 0 10 10" preserveAspectRatio="none"><circle cx="5" cy="5" r="0.9" fill="#3b8ed8"/><ellipse cx="5" cy="5" rx="4.4" ry="1.6" fill="none" stroke="#3b8ed8" stroke-width="0.7"/><ellipse cx="5" cy="5" rx="4.4" ry="1.6" fill="none" stroke="#3b8ed8" stroke-width="0.7" transform="rotate(60 5 5)"/><ellipse cx="5" cy="5" rx="4.4" ry="1.6" fill="none" stroke="#3b8ed8" stroke-width="0.7" transform="rotate(120 5 5)"/></svg>
<div class="t" style="left:54.6px;top:369.54px;font-size:8.7px;color:#cccccc;font-weight:400;">ForgotPassword.tsx</div>
<svg class="r" style="left:40.5px;top:383.12px;" width="10" height="10" viewBox="0 0 10 10" preserveAspectRatio="none"><circle cx="5" cy="5" r="0.9" fill="#3b8ed8"/><ellipse cx="5" cy="5" rx="4.4" ry="1.6" fill="none" stroke="#3b8ed8" stroke-width="0.7"/><ellipse cx="5" cy="5" rx="4.4" ry="1.6" fill="none" stroke="#3b8ed8" stroke-width="0.7" transform="rotate(60 5 5)"/><ellipse cx="5" cy="5" rx="4.4" ry="1.6" fill="none" stroke="#3b8ed8" stroke-width="0.7" transform="rotate(120 5 5)"/></svg>
<div class="t" style="left:54.6px;top:384.06px;font-size:8.7px;color:#cccccc;font-weight:400;">History.tsx</div>
<svg class="r" style="left:40.5px;top:397.64px;" width="10" height="10" viewBox="0 0 10 10" preserveAspectRatio="none"><circle cx="5" cy="5" r="0.9" fill="#3b8ed8"/><ellipse cx="5" cy="5" rx="4.4" ry="1.6" fill="none" stroke="#3b8ed8" stroke-width="0.7"/><ellipse cx="5" cy="5" rx="4.4" ry="1.6" fill="none" stroke="#3b8ed8" stroke-width="0.7" transform="rotate(60 5 5)"/><ellipse cx="5" cy="5" rx="4.4" ry="1.6" fill="none" stroke="#3b8ed8" stroke-width="0.7" transform="rotate(120 5 5)"/></svg>
<div class="t" style="left:54.6px;top:398.58px;font-size:8.7px;color:#cccccc;font-weight:400;">Home.tsx</div>
<svg class="r" style="left:40.5px;top:412.1600000000001px;" width="10" height="10" viewBox="0 0 10 10" preserveAspectRatio="none"><circle cx="5" cy="5" r="0.9" fill="#3b8ed8"/><ellipse cx="5" cy="5" rx="4.4" ry="1.6" fill="none" stroke="#3b8ed8" stroke-width="0.7"/><ellipse cx="5" cy="5" rx="4.4" ry="1.6" fill="none" stroke="#3b8ed8" stroke-width="0.7" transform="rotate(60 5 5)"/><ellipse cx="5" cy="5" rx="4.4" ry="1.6" fill="none" stroke="#3b8ed8" stroke-width="0.7" transform="rotate(120 5 5)"/></svg>
<div class="t" style="left:54.6px;top:413.10px;font-size:8.7px;color:#cccccc;font-weight:400;">Library.tsx</div>
<svg class="r" style="left:40.5px;top:426.68000000000006px;" width="10" height="10" viewBox="0 0 10 10" preserveAspectRatio="none"><circle cx="5" cy="5" r="0.9" fill="#3b8ed8"/><ellipse cx="5" cy="5" rx="4.4" ry="1.6" fill="none" stroke="#3b8ed8" stroke-width="0.7"/><ellipse cx="5" cy="5" rx="4.4" ry="1.6" fill="none" stroke="#3b8ed8" stroke-width="0.7" transform="rotate(60 5 5)"/><ellipse cx="5" cy="5" rx="4.4" ry="1.6" fill="none" stroke="#3b8ed8" stroke-width="0.7" transform="rotate(120 5 5)"/></svg>
<div class="t" style="left:54.6px;top:427.62px;font-size:8.7px;color:#cccccc;font-weight:400;">not-found.tsx</div>
<div class="t" style="left:15.0px;top:441.35px;font-size:8px;color:#8a8a8a;font-weight:700;">OUTLINE</div>
<svg class="r" style="left:4px;top:441px;" width="6" height="8" viewBox="0 0 6 8" preserveAspectRatio="none"><path d="M1 1 L4.5 4 L1 7" fill="none" stroke="#b8b8b8" stroke-width="1.1"/></svg>
<div class="t" style="left:15.0px;top:456.35px;font-size:8px;color:#8a8a8a;font-weight:700;">TIMELINE</div>
<svg class="r" style="left:4px;top:456px;" width="6" height="8" viewBox="0 0 6 8" preserveAspectRatio="none"><path d="M1 1 L4.5 4 L1 7" fill="none" stroke="#b8b8b8" stroke-width="1.1"/></svg>
<div class="r" style="left:162.0px;top:23.0px;width:500px;height:366px;background:#1f1f1f;"></div>
<div class="r" style="left:162.0px;top:23.0px;width:500px;height:24px;background:#181818;"></div>
<div class="r" style="left:162.0px;top:46.0px;width:500px;height:1px;background:#2b2b2b;"></div>
<div class="t" style="left:162.5px;top:31.09px;font-size:8.45px;color:#9d9d9d;font-weight:400;letter-spacing:-0.4px;">ResetPasswordForm.tsx</div>
<div class="r" style="left:267.0px;top:23.0px;width:1px;height:24px;background:#2b2b2b;"></div>
<svg class="r" style="left:276px;top:30.0px;" width="10" height="10" viewBox="0 0 10 10" preserveAspectRatio="none"><circle cx="5" cy="5" r="0.9" fill="#3b8ed8"/><ellipse cx="5" cy="5" rx="4.4" ry="1.8" fill="none" stroke="#3b8ed8" stroke-width="0.75"/><ellipse cx="5" cy="5" rx="4.4" ry="1.8" fill="none" stroke="#3b8ed8" stroke-width="0.75" transform="rotate(60 5 5)"/><ellipse cx="5" cy="5" rx="4.4" ry="1.8" fill="none" stroke="#3b8ed8" stroke-width="0.75" transform="rotate(120 5 5)"/></svg>
<div class="t" style="left:290.0px;top:31.09px;font-size:8.45px;color:#c88a6a;font-weight:400;">SignupForm.tsx</div>
<div class="t" style="left:352.2px;top:31.23px;font-size:8.2px;color:#c88a6a;font-weight:400;">M</div>
<div class="r" style="left:377.0px;top:23.0px;width:1px;height:24px;background:#2b2b2b;"></div>
<div class="r" style="left:378.0px;top:23.0px;width:140px;height:24px;background:#1f1f1f;"></div>
<div class="r" style="left:378.0px;top:23.0px;width:140px;height:1px;background:#0078d4;"></div>
<svg class="r" style="left:386px;top:30.0px;" width="10" height="10" viewBox="0 0 10 10" preserveAspectRatio="none"><circle cx="5" cy="5" r="0.9" fill="#3b8ed8"/><ellipse cx="5" cy="5" rx="4.4" ry="1.8" fill="none" stroke="#3b8ed8" stroke-width="0.75"/><ellipse cx="5" cy="5" rx="4.4" ry="1.8" fill="none" stroke="#3b8ed8" stroke-width="0.75" transform="rotate(60 5 5)"/><ellipse cx="5" cy="5" rx="4.4" ry="1.8" fill="none" stroke="#3b8ed8" stroke-width="0.75" transform="rotate(120 5 5)"/></svg>
<div class="t" style="left:399.8px;top:31.09px;font-size:8.45px;color:#d7916a;font-weight:400;">AdminVideoPlayer.tsx</div>
<div class="t" style="left:485.0px;top:31.23px;font-size:8.2px;color:#d7916a;font-weight:400;">2, U</div>
<svg class="r" style="left:504px;top:30px;" width="10" height="10" viewBox="0 0 10 10" preserveAspectRatio="none"><path d="M2 2 L8 8 M8 2 L2 8" stroke="#e0e0e0" stroke-width="1.3"/></svg>
<div class="r" style="left:518.0px;top:23.0px;width:1px;height:24px;background:#2b2b2b;"></div>
<div class="r" style="left:526.0px;top:30.0px;width:9px;height:10px;border-radius:1px;background:#3a7bd5;"></div>
<div class="t" style="left:539.0px;top:31.17px;font-size:8.3px;color:#a0a0a0;font-weight:400;">schema.ts</div>
<svg class="r" style="left:589px;top:29px;" width="10" height="12" viewBox="0 0 10 12" preserveAspectRatio="none"><path d="M2 1.5 L9 6 L2 10.5 Z" fill="none" stroke="#c8c8c8" stroke-width="1"/></svg>
<svg class="r" style="left:606px;top:29px;" width="12" height="12" viewBox="0 0 12 12" preserveAspectRatio="none"><circle cx="3" cy="3" r="1.6" fill="none" stroke="#c8c8c8"/><circle cx="9" cy="9" r="1.6" fill="none" stroke="#c8c8c8"/><path d="M3 4.6 V10 H7 M9 7.4 V2 H5" fill="none" stroke="#c8c8c8"/></svg>
<svg class="r" style="left:623px;top:29px;" width="12" height="12" viewBox="0 0 12 12" preserveAspectRatio="none"><rect x="1.5" y="1.5" width="9" height="9" rx="1" fill="none" stroke="#c8c8c8"/><path d="M6 1.5 V10.5" stroke="#c8c8c8"/></svg>
<div class="t" style="left:641.0px;top:29.77px;font-size:9px;color:#c8c8c8;font-weight:400;">···</div>
<div class="t" style="left:172.4px;top:53.59px;font-size:8.45px;color:#a9a9a9;font-weight:400;">client</div>
<div class="t" style="left:203.0px;top:53.59px;font-size:8.45px;color:#a9a9a9;font-weight:400;">src</div>
<div class="t" style="left:224.6px;top:53.59px;font-size:8.45px;color:#a9a9a9;font-weight:400;">pages</div>
<svg class="r" style="left:196.5px;top:53.5px;" width="5" height="9" viewBox="0 0 5 9" preserveAspectRatio="none"><path d="M1 1 L4 4.5 L1 8" fill="none" stroke="#a0a0a0" stroke-width="0.9"/></svg>
<svg class="r" style="left:218.39999999999998px;top:53.5px;" width="5" height="9" viewBox="0 0 5 9" preserveAspectRatio="none"><path d="M1 1 L4 4.5 L1 8" fill="none" stroke="#a0a0a0" stroke-width="0.9"/></svg>
<svg class="r" style="left:251.29999999999995px;top:53.5px;" width="5" height="9" viewBox="0 0 5 9" preserveAspectRatio="none"><path d="M1 1 L4 4.5 L1 8" fill="none" stroke="#a0a0a0" stroke-width="0.9"/></svg>
<svg class="r" style="left:359px;top:53.5px;" width="5" height="9" viewBox="0 0 5 9" preserveAspectRatio="none"><path d="M1 1 L4 4.5 L1 8" fill="none" stroke="#a0a0a0" stroke-width="0.9"/></svg>
<svg class="r" style="left:258.5px;top:52.5px;" width="10" height="10" viewBox="0 0 10 10" preserveAspectRatio="none"><circle cx="5" cy="5" r="0.9" fill="#3b8ed8"/><ellipse cx="5" cy="5" rx="4.4" ry="1.8" fill="none" stroke="#3b8ed8" stroke-width="0.75"/><ellipse cx="5" cy="5" rx="4.4" ry="1.8" fill="none" stroke="#3b8ed8" stroke-width="0.75" transform="rotate(60 5 5)"/><ellipse cx="5" cy="5" rx="4.4" ry="1.8" fill="none" stroke="#3b8ed8" stroke-width="0.75" transform="rotate(120 5 5)"/></svg>
<div class="t" style="left:272.7px;top:53.59px;font-size:8.45px;color:#a9a9a9;font-weight:400;">AdminVideoPlayer.tsx</div>
<svg class="r" style="left:366px;top:53px;" width="9.5" height="9.5" viewBox="0 0 9.5 9.5" preserveAspectRatio="none"><path d="M4.75 0.8 L8.7 2.8 L8.7 6.7 L4.75 8.7 L0.8 6.7 L0.8 2.8 Z" fill="none" stroke="#b0b0b0" stroke-width="0.9"/></svg>
<div class="t" style="left:378.4px;top:53.59px;font-size:8.45px;color:#a9a9a9;font-weight:400;">AdminVideoPlayer</div>
<div class="r" style="left:207.2px;top:80.0px;width:1px;height:309px;background:#333333;"></div>
<div class="r" style="left:227.3px;top:188.0px;width:1px;height:201px;background:#333333;"></div>
<div class="r" style="left:247.3px;top:226.0px;width:1px;height:163px;background:#333333;"></div>
<div class="r" style="left:267.4px;top:264.0px;width:1px;height:125px;background:#333333;"></div>
<div class="t" style="left:174.7px;top:79.27px;font-size:8.48px;font-family:'Liberation Mono',monospace;"><span style="color:#858585">176</span></div>
<div class="t" style="left:258.1px;top:79.27px;font-size:8.48px;font-family:'Liberation Mono',monospace;"><span style="color:#d4d4d4">Back to Videos</span></div>
<div class="t" style="left:174.7px;top:91.85px;font-size:8.48px;font-family:'Liberation Mono',monospace;"><span style="color:#858585">177</span></div>
<div class="t" style="left:247.9px;top:91.85px;font-size:8.48px;font-family:'Liberation Mono',monospace;"><span style="color:#808080">&lt;/</span><span style="color:#5cb6cf">Button</span><span style="color:#808080">&gt;</span></div>
<div class="t" style="left:174.7px;top:104.43px;font-size:8.48px;font-family:'Liberation Mono',monospace;"><span style="color:#858585">178</span></div>
<div class="t" style="left:237.7px;top:104.43px;font-size:8.48px;font-family:'Liberation Mono',monospace;"><span style="color:#808080">&lt;/</span><span style="color:#569cd6">div</span><span style="color:#808080">&gt;</span></div>
<div class="t" style="left:174.7px;top:117.01px;font-size:8.48px;font-family:'Liberation Mono',monospace;"><span style="color:#858585">179</span></div>
<div class="t" style="left:227.6px;top:117.01px;font-size:8.48px;font-family:'Liberation Mono',monospace;"><span style="color:#179fff">)</span><span style="color:#d4d4d4">;</span></div>
<div class="t" style="left:174.7px;top:129.59px;font-size:8.48px;font-family:'Liberation Mono',monospace;"><span style="color:#858585">180</span></div>
<div class="t" style="left:217.4px;top:129.59px;font-size:8.48px;font-family:'Liberation Mono',monospace;"><span style="color:#da70d6">}</span></div>
<div class="t" style="left:174.7px;top:142.17px;font-size:8.48px;font-family:'Liberation Mono',monospace;"><span style="color:#858585">181</span></div>
<div class="t" style="left:207.2px;top:142.17px;font-size:8.48px;font-family:'Liberation Mono',monospace;"></div>
<div class="t" style="left:174.7px;top:154.75px;font-size:8.48px;font-family:'Liberation Mono',monospace;"><span style="color:#858585">182</span></div>
<div class="t" style="left:217.4px;top:154.75px;font-size:8.48px;font-family:'Liberation Mono',monospace;"><span style="color:#569cd6">const </span><span style="color:#a4d0ea">owner</span><span style="color:#d4d4d4"> = </span><span style="color:#a4d0ea">videoOwner</span><span style="color:#d4d4d4"> || </span><span style="color:#ffd700">(</span><span style="color:#569cd6">typeof </span><span style="color:#a4d0ea">video</span><span style="color:#d4d4d4">.</span><span style="color:#a4d0ea">userId</span><span style="color:#d4d4d4"> === </span><span style="color:#c99a7c">'object'</span><span style="color:#d4d4d4"> ? </span><span style="color:#a4d0ea">video</span><span style="color:#d4d4d4">.</span><span style="color:#a4d0ea">userId</span><span style="color:#d4d4d4"> : </span><span style="color:#569cd6">null</span><span style="color:#ffd700">)</span><span style="color:#d4d4d4">;</span></div>
<div class="t" style="left:174.7px;top:167.33px;font-size:8.48px;font-family:'Liberation Mono',monospace;"><span style="color:#858585">183</span></div>
<div class="t" style="left:207.2px;top:167.33px;font-size:8.48px;font-family:'Liberation Mono',monospace;"></div>
<div class="t" style="left:174.7px;top:179.91px;font-size:8.48px;font-family:'Liberation Mono',monospace;"><span style="color:#858585">184</span></div>
<div class="t" style="left:217.4px;top:179.91px;font-size:8.48px;font-family:'Liberation Mono',monospace;"><span style="color:#c8c8c8">return </span><span style="color:#ffd700">(</span></div>
<div class="t" style="left:174.7px;top:192.49px;font-size:8.48px;font-family:'Liberation Mono',monospace;"><span style="color:#858585">185</span></div>
<div class="t" style="left:227.6px;top:192.49px;font-size:8.48px;font-family:'Liberation Mono',monospace;"><span style="color:#808080">&lt;</span><span style="color:#569cd6">div </span><span style="color:#a4d0ea">className</span><span style="color:#d4d4d4">=</span><span style="color:#c99a7c">'min-h-screen </span><span style="color:#f0f0f0">&#9632;</span><span style="color:#c99a7c">bg-gray-50'</span><span style="color:#808080">&gt;</span></div>
<div class="t" style="left:174.7px;top:205.07px;font-size:8.48px;font-family:'Liberation Mono',monospace;"><span style="color:#858585">186</span></div>
<div class="t" style="left:237.7px;top:205.07px;font-size:8.48px;font-family:'Liberation Mono',monospace;"><span style="color:#179fff">{</span><span style="color:#6a6a6a">/* Header with Admin Badge */</span><span style="color:#179fff">}</span></div>
<div class="t" style="left:174.7px;top:217.65px;font-size:8.48px;font-family:'Liberation Mono',monospace;"><span style="color:#858585">187</span></div>
<div class="t" style="left:237.7px;top:217.65px;font-size:8.48px;font-family:'Liberation Mono',monospace;"><span style="color:#808080">&lt;</span><span style="color:#569cd6">div </span><span style="color:#a4d0ea">className</span><span style="color:#d4d4d4">=</span><span style="color:#c99a7c">'</span><span style="color:#f0f0f0">&#9632;</span><span style="color:#c99a7c">bg-white border-b sticky top-0 z-10'</span><span style="color:#808080">&gt;</span></div>
<div class="r" style="left:207.0px;top:227.0px;width:442px;height:1px;background:#2a2a2a;"></div>
<div class="r" style="left:207.0px;top:239.5px;width:442px;height:1px;background:#2a2a2a;"></div>
<div class="r" style="left:329.3px;top:227.5px;width:198.43200000000002px;height:12px;background:#3a3d41;"></div>
<div class="t" style="left:174.7px;top:230.23px;font-size:8.48px;font-family:'Liberation Mono',monospace;"><span style="color:#cccccc">188</span></div>
<div class="t" style="left:247.9px;top:230.23px;font-size:8.48px;font-family:'Liberation Mono',monospace;"><span style="color:#808080">&lt;</span><span style="color:#569cd6">div </span><span style="color:#a4d0ea">className</span><span style="color:#d4d4d4">=</span><span style="color:#c99a7c">'max-w-full mx-auto px-4 sm:px-6 lg:px-8'</span><span style="color:#808080">&gt;</span></div>
<div class="t" style="left:174.7px;top:242.81px;font-size:8.48px;font-family:'Liberation Mono',monospace;"><span style="color:#858585">189</span></div>
<div class="t" style="left:258.1px;top:242.81px;font-size:8.48px;font-family:'Liberation Mono',monospace;"><span style="color:#808080">&lt;</span><span style="color:#569cd6">div </span><span style="color:#a4d0ea">className</span><span style="color:#d4d4d4">=</span><span style="color:#c99a7c">'flex items-center justify-between h-16'</span><span style="color:#808080">&gt;</span></div>
<div class="t" style="left:174.7px;top:255.39px;font-size:8.48px;font-family:'Liberation Mono',monospace;"><span style="color:#858585">190</span></div>
<div class="t" style="left:268.3px;top:255.39px;font-size:8.48px;font-family:'Liberation Mono',monospace;"><span style="color:#808080">&lt;</span><span style="color:#569cd6">div </span><span style="color:#a4d0ea">className</span><span style="color:#d4d4d4">=</span><span style="color:#c99a7c">'flex items-center gap-3'</span><span style="color:#808080">&gt;</span></div>
<div class="t" style="left:174.7px;top:267.97px;font-size:8.48px;font-family:'Liberation Mono',monospace;"><span style="color:#858585">191</span></div>
<div class="t" style="left:278.4px;top:267.97px;font-size:8.48px;font-family:'Liberation Mono',monospace;"><span style="color:#808080">&lt;</span><span style="color:#5cb6cf">Button</span></div>
<div class="t" style="left:174.7px;top:280.55px;font-size:8.48px;font-family:'Liberation Mono',monospace;"><span style="color:#858585">192</span></div>
<div class="t" style="left:288.6px;top:280.55px;font-size:8.48px;font-family:'Liberation Mono',monospace;"><span style="color:#a4d0ea">variant</span><span style="color:#d4d4d4">=</span><span style="color:#c99a7c">'ghost'</span></div>
<div class="t" style="left:174.7px;top:293.13px;font-size:8.48px;font-family:'Liberation Mono',monospace;"><span style="color:#858585">193</span></div>
<div class="t" style="left:288.6px;top:293.13px;font-size:8.48px;font-family:'Liberation Mono',monospace;"><span style="color:#a4d0ea">size</span><span style="color:#d4d4d4">=</span><span style="color:#c99a7c">'sm'</span></div>
<div class="t" style="left:174.7px;top:305.71px;font-size:8.48px;font-family:'Liberation Mono',monospace;"><span style="color:#858585">194</span></div>
<div class="t" style="left:288.6px;top:305.71px;font-size:8.48px;font-family:'Liberation Mono',monospace;"><span style="color:#a4d0ea">onClick</span><span style="color:#d4d4d4">=</span><span style="color:#179fff">{</span><span style="color:#ffd700">()</span><span style="color:#569cd6"> =&gt; </span><span style="color:#dcdcaa">setLocation</span><span style="color:#ffd700">(</span><span style="color:#c99a7c">'/admin/videos'</span><span style="color:#ffd700">)</span><span style="color:#179fff">}</span></div>
<div class="t" style="left:174.7px;top:318.29px;font-size:8.48px;font-family:'Liberation Mono',monospace;"><span style="color:#858585">195</span></div>
<div class="t" style="left:278.4px;top:318.29px;font-size:8.48px;font-family:'Liberation Mono',monospace;"><span style="color:#808080">&gt;</span></div>
<div class="t" style="left:174.7px;top:330.87px;font-size:8.48px;font-family:'Liberation Mono',monospace;"><span style="color:#858585">196</span></div>
<div class="t" style="left:288.6px;top:330.87px;font-size:8.48px;font-family:'Liberation Mono',monospace;"><span style="color:#808080">&lt;</span><span style="color:#5cb6cf">CircleArrowLeft </span><span style="color:#a4d0ea">className</span><span style="color:#d4d4d4">=</span><span style="color:#c99a7c">'h-4 w-4 mr-2'</span><span style="color:#808080"> /&gt;</span></div>
<div class="t" style="left:174.7px;top:343.45px;font-size:8.48px;font-family:'Liberation Mono',monospace;"><span style="color:#858585">197</span></div>
<div class="t" style="left:288.6px;top:343.45px;font-size:8.48px;font-family:'Liberation Mono',monospace;"><span style="color:#d4d4d4">Back to Videos</span></div>
<div class="t" style="left:174.7px;top:356.03px;font-size:8.48px;font-family:'Liberation Mono',monospace;"><span style="color:#858585">198</span></div>
<div class="t" style="left:278.4px;top:356.03px;font-size:8.48px;font-family:'Liberation Mono',monospace;"><span style="color:#808080">&lt;/</span><span style="color:#5cb6cf">Button</span><span style="color:#808080">&gt;</span></div>
<div class="t" style="left:174.7px;top:368.61px;font-size:8.48px;font-family:'Liberation Mono',monospace;"><span style="color:#858585">199</span></div>
<div class="t" style="left:278.4px;top:368.61px;font-size:8.48px;font-family:'Liberation Mono',monospace;"><span style="color:#808080">&lt;</span><span style="color:#5cb6cf">Badge </span><span style="color:#a4d0ea">variant</span><span style="color:#d4d4d4">=</span><span style="color:#c99a7c">'outline' </span><span style="color:#a4d0ea">className</span><span style="color:#d4d4d4">=</span><span style="color:#c99a7c">'gap-1'</span><span style="color:#808080">&gt;</span></div>
<div class="t" style="left:174.7px;top:381.19px;font-size:8.48px;font-family:'Liberation Mono',monospace;"><span style="color:#858585">200</span></div>
<div class="t" style="left:288.6px;top:381.19px;font-size:8.48px;font-family:'Liberation Mono',monospace;"><span style="color:#808080">&lt;</span><span style="color:#5cb6cf">Shield </span><span style="color:#a4d0ea">className</span><span style="color:#d4d4d4">=</span><span style="color:#c99a7c">'h-3 w-3'</span><span style="color:#808080"> /&gt;</span></div>
<div class="r" style="left:162.0px;top:67.0px;width:487px;height:13px;background:#1f1f1f;box-shadow:0 2px 3px rgba(0,0,0,0.7);"></div>
<div class="t" style="left:180.0px;top:71.05px;font-size:8.48px;font-family:'Liberation Mono',monospace;"><span style="color:#858585">38</span></div>
<div class="t" style="left:207.2px;top:71.05px;font-size:8.48px;font-family:'Liberation Mono',monospace;"><span style="color:#c8c8c8">export </span><span style="color:#c8c8c8">default </span><span style="color:#569cd6">function </span><span style="color:#dcdcaa">AdminVideoPlayer</span><span style="color:#ffd700">(</span><span style="color:#da70d6">{ </span><span style="color:#a4d0ea">videoId</span><span style="color:#da70d6"> }</span><span style="color:#d4d4d4">: </span><span style="color:#5cb6cf">AdminVideoPlayerProps</span><span style="color:#ffd700">)</span><span style="color:#d4d4d4"> </span><span style="color:#ffd700">{</span></div>
<div class="r" style="left:649.0px;top:67.0px;width:13px;height:322px;background:#1f1f1f;border-left:1px solid #2a2a2a;"></div>
<div class="r" style="left:650.0px;top:184.0px;width:10px;height:2px;background:#9a9a9a;"></div>
<div class="r" style="left:656.0px;top:209.0px;width:3px;height:4px;background:#c05a20;"></div>
<div class="r" style="left:656.0px;top:225.0px;width:3px;height:4px;background:#c05a20;"></div>
<div class="r" style="left:162.0px;top:389.0px;width:500px;height:119px;background:#181818;"></div>
<div class="r" style="left:162.0px;top:389.0px;width:500px;height:1px;background:#2b2b2b;"></div>
<div class="t" style="left:175.0px;top:397.08px;font-size:7.95px;color:#9d9d9d;font-weight:400;">Problems</div>
<div class="t" style="left:234.0px;top:397.08px;font-size:7.95px;color:#9d9d9d;font-weight:400;">Output</div>
<div class="t" style="left:273.5px;top:397.08px;font-size:7.95px;color:#9d9d9d;font-weight:400;">Debug Console</div>
<div class="t" style="left:385.0px;top:397.08px;font-size:7.95px;color:#9d9d9d;font-weight:400;">Ports</div>
<div class="t" style="left:417.2px;top:397.08px;font-size:7.95px;color:#9d9d9d;font-weight:400;">Postman Console</div>
<div class="r" style="left:211.0px;top:395.0px;width:11px;height:11px;border-radius:50%;background:#1f6fc4;"></div>
<div class="t" style="left:214.5px;top:397.34px;font-size:7.5px;color:#fff;font-weight:400;">2</div>
<div class="r" style="left:336.0px;top:393.0px;width:41px;height:15px;border-radius:3px;background:#2e2e2e;"></div>
<div class="t" style="left:341.0px;top:397.11px;font-size:7.9px;color:#e0e0e0;font-weight:700;">Terminal</div>
<svg class="r" style="left:518px;top:395px;" width="10" height="10" viewBox="0 0 10 10" preserveAspectRatio="none"><rect x="0.5" y="0.5" width="9" height="9" rx="1" fill="none" stroke="#a8a8a8" stroke-width="0.9"/><path d="M2.5 3 L4.5 5 L2.5 7 M5 7.5 H7.5" fill="none" stroke="#a8a8a8" stroke-width="0.8"/></svg>
<div class="t" style="left:530.0px;top:396.91px;font-size:7.9px;color:#b0b0b0;font-weight:400;">bash</div>
<div class="t" style="left:552.0px;top:394.72px;font-size:12px;color:#b8b8b8;font-weight:400;">+</div>
<div class="t" style="left:562.0px;top:394.77px;font-size:9px;color:#b8b8b8;font-weight:400;">&#8964;</div>
<svg class="r" style="left:576px;top:395px;" width="10" height="10" viewBox="0 0 10 10" preserveAspectRatio="none"><rect x="0.5" y="0.5" width="9" height="9" rx="1" fill="none" stroke="#a8a8a8" stroke-width="0.9"/><path d="M5 0.5 V9.5" stroke="#a8a8a8" stroke-width="0.9"/></svg>
<svg class="r" style="left:592px;top:395px;" width="9" height="10" viewBox="0 0 9 10" preserveAspectRatio="none"><path d="M1 2 H8 M3.5 2 V1 H5.5 V2 M2 2.5 L2.6 9.5 H6.4 L7 2.5" fill="none" stroke="#a8a8a8" stroke-width="0.9"/></svg>
<div class="t" style="left:608.0px;top:395.77px;font-size:9px;color:#b8b8b8;font-weight:400;">···</div>
<svg class="r" style="left:624px;top:396px;" width="10" height="8" viewBox="0 0 10 8" preserveAspectRatio="none"><path d="M1 6 L5 2 L9 6" fill="none" stroke="#b8b8b8" stroke-width="1.1"/></svg>
<svg class="r" style="left:641px;top:396px;" width="10" height="10" viewBox="0 0 10 10" preserveAspectRatio="none"><path d="M1.5 1.5 L8.5 8.5 M8.5 1.5 L1.5 8.5" stroke="#b8b8b8" stroke-width="1.1"/></svg>
<div class="t" style="left:175.0px;top:414.35px;font-size:8.48px;font-family:'Liberation Mono',monospace;"><span style="color:#cccccc">}</span></div>
<div class="t" style="left:175.6px;top:425.73px;font-size:7.72px;font-family:'Liberation Mono',monospace;"><span style="color:#cccccc">10:07:33 PM [express] GET /api/notifications/unread-count 304 in 41ms :: {"count":0}</span></div>
<div class="r" style="left:176.0px;top:435.0px;width:5px;height:10px;box-sizing:border-box;border:1px solid #b0b0b0;"></div>
<div class="t" style="left:366.0px;top:456.35px;font-size:8px;color:#555;font-weight:400;">Ctrl+K to generate a command</div>
<div class="r" style="left:662.0px;top:23.0px;width:240px;height:485px;background:#181818;"></div>
<div class="r" style="left:662.0px;top:23.0px;width:1px;height:485px;background:#2b2b2b;"></div>
<div class="r" style="left:670.0px;top:28.5px;width:110px;height:13px;border-radius:3px;background:#2d2d2d;"></div>
<div class="t" style="left:674.0px;top:31.56px;font-size:7.64px;color:#e0e0e0;font-weight:700;">What&#8217;s happening right now</div>
<div class="t" style="left:839.0px;top:29.52px;font-size:12px;color:#c8c8c8;font-weight:400;">+</div>
<svg class="r" style="left:853px;top:29px;" width="12" height="12" viewBox="0 0 12 12" preserveAspectRatio="none"><circle cx="6" cy="6" r="4.5" fill="none" stroke="#c8c8c8" stroke-width="1.2"/><path d="M6 3.5 V6 L7.8 7.2" fill="none" stroke="#c8c8c8"/></svg>
<svg class="r" style="left:868px;top:29px;" width="12" height="12" viewBox="0 0 12 12" preserveAspectRatio="none"><rect x="1.5" y="1.5" width="7" height="7" rx="1" fill="none" stroke="#c8c8c8"/><rect x="3.5" y="3.5" width="7" height="7" rx="1" fill="none" stroke="#c8c8c8"/></svg>
<div class="t" style="left:883.0px;top:29.77px;font-size:9px;color:#c8c8c8;font-weight:400;">···</div>
<div class="r" style="left:668.3px;top:47.0px;width:226px;height:57px;border-radius:5px;background:#262626;border:1px solid #2c2c2c;box-sizing:border-box;"></div>
<div class="t" style="left:674.2px;top:55.23px;font-size:8.55px;color:#cfcfcf;font-weight:400;">Now add a check in users video viewing page that user</div>
<div class="t" style="left:674.2px;top:68.13px;font-size:8.55px;color:#cfcfcf;font-weight:400;">can only view videos made by themseleves and not that</div>
<div class="t" style="left:674.2px;top:81.03px;font-size:8.55px;color:#cfcfcf;font-weight:400;">of other users. Basically video&#8217;s ownerId or userId</div>
<div class="t" style="left:674.2px;top:94.03px;font-size:8.55px;color:#5a5a5a;font-weight:400;">should be equal to current userId or else navigate back</div>
<div class="t" style="left:701.7px;top:112.73px;font-size:8.55px;color:#cfcfcf;font-weight:400;">view your own videos&quot;</div>
<div class="r" style="left:691.5px;top:132.5px;width:3.2px;height:3.2px;border-radius:50%;background:#d8d8d8;"></div>
<div class="t" style="left:701.7px;top:130.03px;font-size:8.55px;color:#cfcfcf;font-weight:400;"><b>Automatic redirect:</b> Takes user back to their</div>
<div class="t" style="left:701.7px;top:142.53px;font-size:8.55px;color:#cfcfcf;font-weight:400;">library</div>
<div class="r" style="left:691.5px;top:162.5px;width:3.2px;height:3.2px;border-radius:50%;background:#d8d8d8;"></div>
<div class="t" style="left:701.7px;top:160.03px;font-size:8.55px;color:#cfcfcf;font-weight:400;"><b>Happens after loading:</b> User doesn&#8217;t see</div>
<div class="t" style="left:701.7px;top:172.53px;font-size:8.55px;color:#cfcfcf;font-weight:400;">unauthorized content flash</div>
<div class="t" style="left:675.0px;top:198.07px;font-size:9.0px;color:#e0e0e0;font-weight:700;">Security:</div>
<div class="r" style="left:675.5px;top:220.0px;width:3.2px;height:3.2px;border-radius:50%;background:#d8d8d8;"></div>
<div class="r" style="left:687.0px;top:217.0px;width:9px;height:9px;border-radius:1.5px;background:#2ea043;"></div>
<svg class="r" style="left:687px;top:217.0px;" width="9" height="9" viewBox="0 0 9 9" preserveAspectRatio="none"><path d="M2 4.8 L3.8 6.6 L7.2 2.6" fill="none" stroke="#fff" stroke-width="1"/></svg>
<div class="t" style="left:700.0px;top:217.53px;font-size:8.55px;color:#cfcfcf;font-weight:400;">Client-side protection (prevents UI access)</div>
<div class="r" style="left:675.5px;top:236.9px;width:3.2px;height:3.2px;border-radius:50%;background:#d8d8d8;"></div>
<div class="r" style="left:687.0px;top:233.9px;width:9px;height:9px;border-radius:1.5px;background:#2ea043;"></div>
<svg class="r" style="left:687px;top:233.89999999999998px;" width="9" height="9" viewBox="0 0 9 9" preserveAspectRatio="none"><path d="M2 4.8 L3.8 6.6 L7.2 2.6" fill="none" stroke="#fff" stroke-width="1"/></svg>
<div class="t" style="left:700.0px;top:234.43px;font-size:8.55px;color:#cfcfcf;font-weight:400;">Works after loading (no flash of content)</div>
<div class="r" style="left:675.5px;top:253.8px;width:3.2px;height:3.2px;border-radius:50%;background:#d8d8d8;"></div>
<div class="r" style="left:687.0px;top:250.8px;width:9px;height:9px;border-radius:1.5px;background:#2ea043;"></div>
<svg class="r" style="left:687px;top:250.79999999999995px;" width="9" height="9" viewBox="0 0 9 9" preserveAspectRatio="none"><path d="M2 4.8 L3.8 6.6 L7.2 2.6" fill="none" stroke="#fff" stroke-width="1"/></svg>
<div class="t" style="left:700.0px;top:251.33px;font-size:8.55px;color:#cfcfcf;font-weight:400;">Clean error messaging</div>
<div class="r" style="left:675.5px;top:270.7px;width:3.2px;height:3.2px;border-radius:50%;background:#d8d8d8;"></div>
<div class="r" style="left:687.0px;top:267.7px;width:9px;height:9px;border-radius:1.5px;background:#2ea043;"></div>
<svg class="r" style="left:687px;top:267.70000000000005px;" width="9" height="9" viewBox="0 0 9 9" preserveAspectRatio="none"><path d="M2 4.8 L3.8 6.6 L7.2 2.6" fill="none" stroke="#fff" stroke-width="1"/></svg>
<div class="t" style="left:700.0px;top:268.23px;font-size:8.55px;color:#cfcfcf;font-weight:400;">Redirects to safe location (library)</div>
<div class="t" style="left:675.0px;top:286.33px;font-size:8.55px;color:#cfcfcf;font-weight:400;">Now users can only view their own videos! If they try to</div>
<div class="t" style="left:675.0px;top:299.13px;font-size:8.55px;color:#cfcfcf;font-weight:400;">access someone else&#8217;s video, they&#8217;ll see a toast message</div>
<div class="t" style="left:675.0px;top:311.93px;font-size:8.55px;color:#cfcfcf;font-weight:400;">and be redirected back to their library. </div>
<svg class="r" style="left:826px;top:310px;" width="10" height="10" viewBox="0 0 10 10" preserveAspectRatio="none"><path d="M8.5 1.5 C6 1.5 3.5 3.5 2.5 6.5 L3.5 7.5 C6.5 6.5 8.5 4 8.5 1.5 Z" fill="#d0d8e8"/><path d="M2.5 6.5 L1 9 L3.5 7.5" fill="#e06030"/></svg>
<svg class="r" style="left:674px;top:336px;" width="9" height="8" viewBox="0 0 9 8" preserveAspectRatio="none"><path d="M0.5 1 H8.5 M0.5 3 H8.5 M0.5 5 H8.5 M0.5 7 H6" stroke="#5f5f5f" stroke-width="0.9"/></svg>
<div class="t" style="left:685.8px;top:336.64px;font-size:7.5px;color:#8a8a8a;font-weight:400;">Review Changes</div>
<svg class="r" style="left:832px;top:335px;" width="9" height="9" viewBox="0 0 9 9" preserveAspectRatio="none"><path d="M1 4 H3 V8.5 H1 Z M3 4.5 L5 1 C6 1 6.2 2 6 3.5 H8 C8.6 3.5 8.8 4 8.6 4.6 L7.6 8 C7.4 8.4 7 8.5 6.6 8.5 H3" fill="none" stroke="#6f6f6f" stroke-width="0.8"/></svg>
<svg class="r" style="left:847px;top:335px;" width="9" height="9" viewBox="0 0 9 9" preserveAspectRatio="none"><path d="M1 5 H3 V0.5 H1 Z M3 4.5 L5 8 C6 8 6.2 7 6 5.5 H8 C8.6 5.5 8.8 5 8.6 4.4 L7.6 1 C7.4 0.6 7 0.5 6.6 0.5 H3" fill="none" stroke="#6f6f6f" stroke-width="0.8"/></svg>
<svg class="r" style="left:863px;top:335px;" width="9" height="9" viewBox="0 0 9 9" preserveAspectRatio="none"><rect x="2.5" y="2.5" width="6" height="6" rx="1" fill="none" stroke="#6f6f6f" stroke-width="0.8"/><path d="M1 6.5 V1 H6.5" fill="none" stroke="#6f6f6f" stroke-width="0.8"/></svg>
<div class="t" style="left:878.0px;top:334.77px;font-size:9px;color:#777;font-weight:400;">···</div>
<div class="r" style="left:668.5px;top:391.0px;width:226px;height:70px;box-sizing:border-box;border:1px solid #2e2e2e;border-radius:6px;background:#222222;"></div>
<div class="r" style="left:674.0px;top:397.0px;width:12px;height:12px;border-radius:3px;background:#2b2b2b;"></div>
<div class="t" style="left:692.0px;top:399.56px;font-size:8.5px;color:#6a6a6a;font-weight:400;">+ Browser</div>
<div class="t" style="left:854.0px;top:399.73px;font-size:8.2px;color:#6a6a6a;font-weight:400;">46.5%</div>
<div class="t" style="left:674.0px;top:416.94px;font-size:8.7px;color:#4a4a4a;font-weight:400;">Plan, search, build anything</div>
<div class="t" style="left:678.0px;top:443.06px;font-size:8.5px;color:#4a4a4a;font-weight:400;">&#8734; Agent</div>
<div class="t" style="left:749.0px;top:444.06px;font-size:8.5px;color:#4a4a4a;font-weight:400;">Auto</div>
<div class="r" style="left:0.0px;top:488.0px;width:902px;height:20px;background:#181818;"></div>
</div>
<div class="r" style="left:0;top:380px;width:902px;height:128px;background:linear-gradient(to bottom, rgba(0,0,0,0) 0%, rgba(0,0,0,0.25) 40%, rgba(0,0,0,0.75) 75%, rgba(0,0,0,0.98) 88%, #000 100%);"></div>
<div class="r" style="left:8.5px;top:418.5px;width:48px;height:48px;border-radius:50%;background:rgba(38,38,38,0.75);"></div>
<svg class="r" style="left:26px;top:434px;" width="16" height="17" viewBox="0 0 16 17" preserveAspectRatio="none"><path d="M2 1 L15 8.5 L2 16 Z" fill="#fff"/></svg>
<div class="t" style="left:64.8px;top:432.49px;font-size:19.1px;color:#fff;font-weight:400;transform:scaleY(1.04);">0:03 / 0:03</div>
<svg class="r" style="left:728px;top:431px;" width="24" height="22" viewBox="0 0 24 22" preserveAspectRatio="none"><path d="M2 7.5 H7 L13 2 V20 L7 14.5 H2 Z" fill="#8a8a8a"/><path d="M16 6 C18.5 8.5 18.5 13.5 16 16" fill="none" stroke="#8a8a8a" stroke-width="2.2"/><path d="M18.5 2.5 C23 6.5 23 15.5 18.5 19.5" fill="none" stroke="#8a8a8a" stroke-width="2.2"/></svg>
<svg class="r" style="left:796px;top:434px;" width="18" height="18" viewBox="0 0 18 18" preserveAspectRatio="none"><path d="M1.5 6 V1.5 H6 M12 1.5 H16.5 V6 M16.5 12 V16.5 H12 M6 16.5 H1.5 V12" fill="none" stroke="#fff" stroke-width="2.6"/></svg>
<div class="r" style="left:867.2px;top:433.2px;width:4.8px;height:4.8px;border-radius:50%;background:#fff;"></div>
<div class="r" style="left:867.2px;top:440.0px;width:4.8px;height:4.8px;border-radius:50%;background:#fff;"></div>
<div class="r" style="left:867.2px;top:446.9px;width:4.8px;height:4.8px;border-radius:50%;background:#fff;"></div>
<div class="r" style="left:22.0px;top:475.0px;width:858px;height:6px;border-radius:3px;background:#fff;"></div>
<div class="r" style="left:99.0px;top:506.5px;width:31px;height:1.5px;background:#bfe3ee;"></div>
<div class="r" style="left:231.0px;top:506.5px;width:28px;height:1.5px;background:#bfe3ee;"></div>
<div class="r" style="left:329.0px;top:506.5px;width:26px;height:1.5px;background:#bfe3ee;"></div>
</div>
<div class="r" style="left:341px;top:842px;width:902px;height:60px;border-radius:16px;background:#f3f4f6;"></div>
<div class="t" style="left:363.00px;top:866.88px;font-size:25.9px;color:#000;font-weight:700;">Summary</div>
<div class="r" style="left:1270.5px;top:167px;width:604.5px;height:740px;box-sizing:border-box;border:2px solid #d1d5db;border-radius:14px;background:#fff;"></div>
<div class="r" style="left:1273px;top:230px;width:599px;height:1px;background:#e5e7eb;"></div>
<div class="r" style="left:1573px;top:169px;width:1px;height:61px;background:#f3f4f6;"></div>
<div class="r" style="left:1272px;top:228px;width:301px;height:3px;background:#9333ea;"></div>
<svg class="r" style="left:1370px;top:185px;" width="28" height="28" viewBox="0 0 24 24" fill="none" stroke="#9333ea" stroke-width="1.8" stroke-linecap="round" stroke-linejoin="round"><path d="M22 12h-2.48a2 2 0 0 0-1.93 1.46l-2.35 8.36a.25.25 0 0 1-.48 0L9.24 2.18a.25.25 0 0 0-.48 0l-2.35 8.36A2 2 0 0 1 4.49 12H2"/></svg>
<div class="t" style="left:1405.50px;top:190.80px;font-size:18.9px;color:#9333ea;font-weight:700;transform:scaleY(1.06);transform-origin:0 16.00px;">Activity</div>
<svg class="r" style="left:1659.8px;top:185.8px;" width="28" height="28" viewBox="0 0 24 24" fill="none" stroke="#6b6461" stroke-width="1.8" stroke-linecap="round" stroke-linejoin="round"><path d="M15 2H6a2 2 0 0 0-2 2v16a2 2 0 0 0 2 2h12a2 2 0 0 0 2-2V7Z"/><path d="M14 2v4a2 2 0 0 0 2 2h4"/><path d="M10 9H8"/><path d="M16 13H8"/><path d="M16 17H8"/></svg>
<div class="t" style="left:1696.50px;top:191.14px;font-size:18.5px;color:#78716c;font-weight:700;transform:scaleY(1.06);transform-origin:0 15.66px;">Transcript</div>
<div class="r" style="left:1294px;top:286px;width:558px;height:166px;border-radius:16px;background:#f3f4f6;"></div>
<div class="r" style="left:1316px;top:307px;width:43.5px;height:43.5px;border-radius:50%;background:#a855f7;"></div>
<div class="t" style="left:1324.30px;top:318.92px;font-size:19px;color:#fff;font-weight:700;letter-spacing:0.6px;">PU</div>
<div class="r" style="left:1375px;top:307px;width:455px;height:54px;box-sizing:border-box;border:1px solid #d1d5db;border-radius:12px;background:#fff;"></div>
<div class="t" style="left:1392.00px;top:323.80px;font-size:18.9px;color:#9ca3af;font-weight:400;">Leave a Comment</div>
<svg class="r" style="left:1816px;top:347px" width="12" height="12" viewBox="0 0 12 12"><path d="M11 3 L3 11 M11 7 L7 11" stroke="#333" stroke-width="1.1"/></svg>
<div class="r" style="left:1375px;top:388px;width:222px;height:43px;border-radius:11px;background:#dc2626;"></div>
<div class="t" style="left:1435.00px;top:401.09px;font-size:18.8px;color:#fff;font-weight:400;">Video Reply</div>
<div class="r" style="left:1608px;top:388px;width:222px;height:43px;border-radius:11px;background:#c08cf0;"></div>
<svg class="r" style="left:1681.2px;top:399.3px;" width="21.5" height="21.5" viewBox="0 0 24 24" fill="none" stroke="#fff" stroke-width="2" stroke-linecap="round" stroke-linejoin="round"><path d="M14.536 21.686a.5.5 0 0 0 .937-.024l6.5-19a.496.496 0 0 0-.635-.635l-19 6.5a.5.5 0 0 0-.024.937l7.93 3.18a2 2 0 0 1 1.112 1.11z"/><path d="m21.854 2.147-10.94 10.939"/></svg>
<div class="t" style="left:1718.50px;top:399.96px;font-size:19.3px;color:#fff;font-weight:400;">Post</div>
<div class="t" style="left:1294.00px;top:482.28px;font-size:23.3px;color:#000;font-weight:700;">1 Comments</div>
<div class="r" style="left:1294px;top:534px;width:43px;height:43px;border-radius:50%;background:#a855f7;"></div>
<div class="t" style="left:1303.50px;top:546.91px;font-size:17px;color:#fff;font-weight:700;">BO</div>
<div class="t" style="left:1353.50px;top:537.92px;font-size:19px;color:#000;font-weight:400;">bob</div>
<div class="t" style="left:1396.50px;top:539.96px;font-size:16px;color:#78716c;font-weight:400;">1 month ago</div>
<div class="t" style="left:1353.00px;top:570.23px;font-size:19.1px;color:#374151;font-weight:400;">Hello Dude</div>
<div class="r" style="left:1353px;top:604px;width:114px;height:32px;box-sizing:border-box;border:1px solid #e5e7eb;border-radius:16px;background:#fff;"></div>
<svg class="r" style="left:1370.9px;top:609px;" width="22" height="22" viewBox="0 0 24 24" fill="none" stroke="#000" stroke-width="2.1" stroke-linecap="round" stroke-linejoin="round"><polyline points="9 17 4 12 9 7"/><path d="M20 18v-2a4 4 0 0 0-4-4H4"/></svg>
<div class="t" style="left:1408.00px;top:610.72px;font-size:16.4px;color:#111;font-weight:400;">Reply</div>
<div class="r" style="left:1886px;top:157px;width:20px;height:732px;background:#f8f9fa;"></div>
<div class="r" style="left:1891px;top:184px;width:13px;height:559px;border-radius:7px;background:#8a8a8a;"></div>
<svg class="r" style="left:1890px;top:165px" width="14" height="10" viewBox="0 0 14 10"><path d="M7 1 L13 9 L1 9 Z" fill="#8a8a8a"/></svg>
<svg class="r" style="left:1890px;top:872px" width="14" height="10" viewBox="0 0 14 10"><path d="M1 1 L13 1 L7 9 Z" fill="#8a8a8a"/></svg>
</div></div>
<div style="position:absolute;left:0;top:0;width:1px;height:889px;background:#1f2023"></div>
</body></html>
